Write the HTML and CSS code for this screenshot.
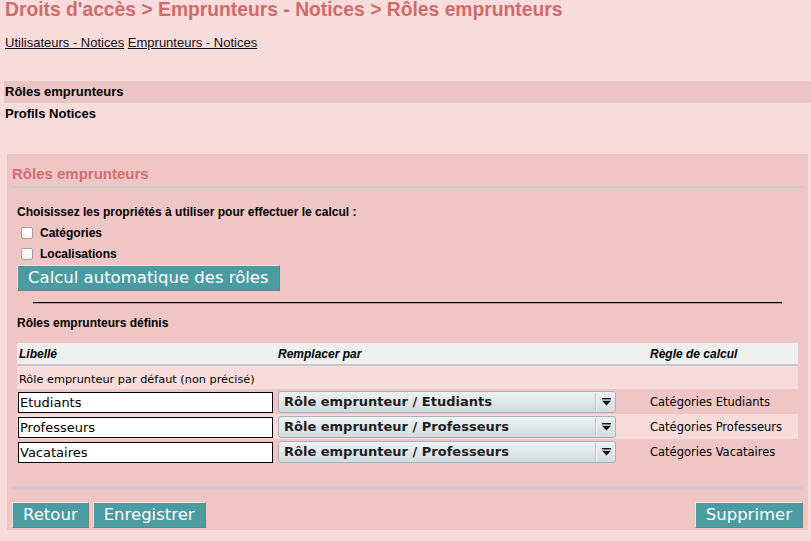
FILE: index.html
```html
<!DOCTYPE html>
<html lang="fr">
<head>
<meta charset="utf-8">
<title>Rôles emprunteurs</title>
<link rel="stylesheet" href="styles.css">
</head>
<body>
<h1 class="title">Droits d'accès &gt; Emprunteurs - Notices &gt; Rôles emprunteurs</h1>
<div class="tabs"><a href="#">Utilisateurs - Notices</a> <a href="#">Emprunteurs - Notices</a></div>
<ul class="menu">
  <li class="menu-item active">Rôles emprunteurs</li>
  <li class="menu-item">Profils Notices</li>
</ul>
<div class="panel">
  <h3 class="panel-title">Rôles emprunteurs</h3>
  <div class="panel-body">
    <p class="label intro">Choisissez les propriétés à utiliser pour effectuer le calcul :</p>
    <div class="checks">
      <label class="check"><span class="box"></span>Catégories</label>
      <label class="check"><span class="box"></span>Localisations</label>
    </div>
    <button class="btn btn-calc">Calcul automatique des rôles</button>
    <hr class="sep">
    <p class="label subtitle">Rôles emprunteurs définis</p>
    <table class="roles">
      <colgroup><col class="c1"><col class="c2"><col class="c3"></colgroup>
      <thead>
        <tr><th>Libellé</th><th>Remplacer par</th><th>Règle de calcul</th></tr>
      </thead>
      <tbody>
        <tr class="odd first"><td colspan="3">Rôle emprunteur par défaut (non précisé)</td></tr>
        <tr class="even">
          <td class="cell-input"><div class="field">Etudiants</div></td>
          <td><div class="combo"><span class="combo-text">Rôle emprunteur / Etudiants</span><span class="combo-btn"><svg width="9" height="8" viewBox="0 0 9 8"><rect x="0" y="0" width="9" height="1.4" fill="#111"/><path d="M0 2.8h9L4.5 7.6z" fill="#111"/></svg></span></div></td>
          <td class="rule">Catégories Etudiants</td>
        </tr>
        <tr class="odd">
          <td class="cell-input"><div class="field">Professeurs</div></td>
          <td><div class="combo"><span class="combo-text">Rôle emprunteur / Professeurs</span><span class="combo-btn"><svg width="9" height="8" viewBox="0 0 9 8"><rect x="0" y="0" width="9" height="1.4" fill="#111"/><path d="M0 2.8h9L4.5 7.6z" fill="#111"/></svg></span></div></td>
          <td class="rule">Catégories Professeurs</td>
        </tr>
        <tr class="even">
          <td class="cell-input"><div class="field">Vacataires</div></td>
          <td><div class="combo"><span class="combo-text">Rôle emprunteur / Professeurs</span><span class="combo-btn"><svg width="9" height="8" viewBox="0 0 9 8"><rect x="0" y="0" width="9" height="1.4" fill="#111"/><path d="M0 2.8h9L4.5 7.6z" fill="#111"/></svg></span></div></td>
          <td class="rule">Catégories Vacataires</td>
        </tr>
      </tbody>
    </table>
  </div>
  <div class="panel-footer">
    <button class="btn">Retour</button>
    <button class="btn">Enregistrer</button>
    <button class="btn btn-right">Supprimer</button>
  </div>
</div>
</body>
</html>
```

FILE: styles.css
```css
* { box-sizing: border-box; }

body {
  margin: 0;
  background: #f8dcdc;
  font-family: "Liberation Sans", Arial, sans-serif;
  color: #000;
}

.title {
  margin: 0;
  padding: 0 5px;
  font-size: 19.3px;
  line-height: 20px;
  font-weight: bold;
  color: #cf6b6b;
  white-space: nowrap;
}

.tabs {
  margin-top: 15px;
  padding-left: 5px;
  font-size: 13px;
  line-height: 15px;
}
.tabs a { color: #111; text-decoration: underline; }

.menu {
  list-style: none;
  margin: 31px 0 0 4px;
  padding: 0;
  font-size: 13px;
  font-weight: bold;
}
.menu-item {
  height: 21px;
  line-height: 21px;
  padding-left: 1px;
}
.menu-item.active {
  height: 22px;
  line-height: 22px;
  background: #ebc5c5;
}

.panel {
  margin: 30px 3px 0 7px;
  background: #efc5c5;
  padding-bottom: 1.5px;
}

.panel-title {
  margin: 0 5px;
  padding: 11px 0 3px;
  font-size: 15px;
  line-height: 18px;
  font-weight: bold;
  color: #d07070;
  border-bottom: 2px solid #cccccc;
}

.panel-body { padding: 0 10px; }

.label {
  margin: 0;
  font-size: 12px;
  line-height: 14px;
  font-weight: bold;
}
.intro { margin-top: 17px; }

.checks { margin-top: 3px; }
.check {
  display: flex;
  align-items: center;
  gap: 7px;
  height: 21.5px;
  padding-left: 4px;
  font-size: 12px;
  line-height: 14px;
  font-weight: bold;
}
.box {
  width: 12px;
  height: 12px;
  border: 1px solid #a2a2a2;
  border-radius: 2px;
  background: linear-gradient(#ffffff, #f2f2f2);
}

.btn {
  display: inline-block;
  margin: 0;
  padding: 2px 10px;
  font-family: "DejaVu Sans", sans-serif;
  font-size: 16.5px;
  line-height: 20px;
  color: #fff;
  background: #4b9ca1;
  border: 1px solid;
  border-color: #e4e4e4 #7c7c7c #7c7c7c #e4e4e4;
  border-radius: 0;
}
.btn-calc { display: block; margin-top: 0; }

.sep {
  height: 0;
  margin: 10.5px 16px 0;
  border: 0;
  border-top: 1px solid #000;
  border-bottom: 1px solid #a8a0a0;
}

.subtitle { margin-top: 12.5px; }

.roles {
  width: 100%;
  margin-top: 13px;
  border-collapse: collapse;
  table-layout: fixed;
}
.c1 { width: 259px; }
.c2 { width: 372px; }

.roles th {
  height: 22px;
  padding: 0 2px;
  text-align: left;
  font-size: 12px;
  line-height: 14px;
  font-style: italic;
  font-weight: bold;
  background: #efefef;
  border-bottom: 2px solid #c8c8c8;
}

.roles td {
  height: 25px;
  padding: 0 2px;
  font-family: "DejaVu Sans", sans-serif;
  font-size: 11.3px;
  line-height: 14px;
  vertical-align: middle;
}
.roles tr.first td { height: 24px; padding-top: 4px; }
.roles tr.odd { background: #f8dcdc; }
.roles td.cell-input { padding-left: 1px; }
.roles td.rule { font-size: 11.5px; padding-left: 2px; }

.field {
  width: 255px;
  height: 21px;
  margin-top: 1px;
  padding: 0 1px;
  border: 1px solid #000;
  background: #fff;
  font-family: "DejaVu Sans", sans-serif;
  font-size: 13px;
  line-height: 19px;
  color: #000;
}

.combo {
  display: flex;
  align-items: stretch;
  width: 338px;
  height: 22px;
  border: 1px solid #a7b2b7;
  border-radius: 3px;
  background: linear-gradient(#eef2f3, #d4dcdf);
  font-family: "DejaVu Sans", sans-serif;
  font-size: 13px;
  font-weight: bold;
  line-height: 20px;
  color: #1e1e1e;
}
.combo-text { flex: 1; padding-left: 5px; white-space: nowrap; }
.combo-btn {
  display: flex;
  align-items: center;
  justify-content: center;
  width: 19px;
  margin: 1px 0;
  border-left: 1px solid #f4f6f7;
  box-shadow: -1px 0 0 #bcc5c9;
}

.panel-footer {
  display: flex;
  gap: 4px;
  margin: 22.5px 5px 0;
  padding-top: 13.5px;
  border-top: 2px solid #cccccc;
}
.btn-right { margin-left: auto; }
```
